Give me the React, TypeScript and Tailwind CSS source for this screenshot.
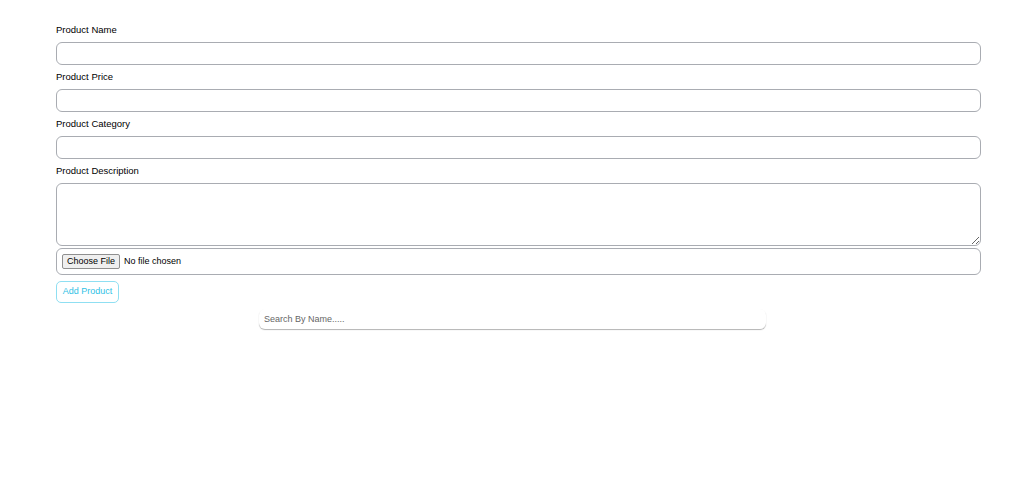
import React, { useState } from 'react';

export default function App() {
  const [search, setSearch] = useState('');

  const fields = ['Product Name', 'Product Price', 'Product Category'];

  return (
    <div className="min-h-screen bg-white font-['Liberation_Sans',Arial,sans-serif] text-black">
      <form className="ml-[56px] w-[925px] pt-[23px] flex flex-col">
        {fields.map((label) => (
          <div key={label} className="flex flex-col">
            <label className="block text-[9.5px] leading-[13px] mb-[6px]">{label}</label>
            <input
              type="text"
              className="h-[23px] mb-[5px] w-full rounded-md border border-[#a9acb2] px-2 text-xs outline-none"
            />
          </div>
        ))}

        {/* Description */}
        <label className="block text-[9.5px] leading-[13px] mb-[6px]">Product Description</label>
        <textarea className="h-[63px] w-full rounded-md border border-[#a9acb2] px-2 py-1 text-xs outline-none" />

        {/* File */}
        <div className="mt-[2px] h-[27px] w-full rounded-md border border-[#a9acb2] flex items-center px-[5px]">
          <input
            type="file"
            className="text-[9px] file:mr-[4px] file:h-[15px] file:px-[4px] file:border file:border-[#8f8f8f] file:rounded-[2px] file:bg-[#efefef] file:text-[9px] file:text-black"
          />
        </div>

        <div className="mt-[6px] flex">
          <button
            type="button"
            className="h-[22px] w-[63px] rounded-[5px] border border-[#8fdff2] text-[9px] text-[#2fc2e5] bg-white"
          >
            Add Product
          </button>
        </div>
      </form>

      {/* Search */}
      <div className="flex justify-center mt-[6px]">
        <input
          type="text"
          value={search}
          onChange={(e) => setSearch(e.target.value)}
          placeholder="Search By Name....."
          className="ml-[1px] w-[507px] h-[20px] rounded-md px-[5px] text-[9px] text-[#444] placeholder-[#666] outline-none shadow-[0_1px_1px_rgba(0,0,0,0.3)]"
        />
      </div>
    </div>
  );
}
